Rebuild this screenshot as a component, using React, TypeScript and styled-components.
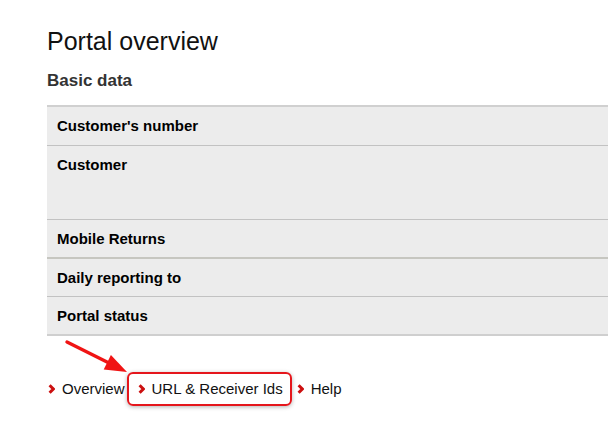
import styled, { createGlobalStyle } from "styled-components"

const GlobalStyle = createGlobalStyle`
  body {
    margin: 0;
    background: #ffffff;
    font-family: "Liberation Sans", Arial, sans-serif;
    color: #000000;
  }
`

const Page = styled.div`
  position: relative;
  padding: 26px 0 0 47px;
  overflow: hidden;
  height: 441px;
  box-sizing: border-box;
`

const Title = styled.h1`
  margin: 0;
  font-size: 25px;
  line-height: 30px;
  font-weight: normal;
  color: #111111;
`

const SubTitle = styled.h2`
  margin: 15px 0 14px;
  font-size: 17px;
  line-height: 20px;
  font-weight: bold;
  color: #333333;
`

const Table = styled.div`
  display: flex;
  flex-direction: column;
  background: #ececec;
  border-top: 2px solid #d0d0d0;
  border-bottom: 2px solid #cfcfcf;
`

const Row = styled.div<{ $height: number; $thick?: boolean; $last?: boolean }>`
  height: ${(p) => p.$height}px;
  padding: 10px 10px 0;
  box-sizing: border-box;
  font-size: 15px;
  line-height: 18px;
  font-weight: bold;
  border-bottom: ${(p) => (p.$last ? "none" : p.$thick ? "2px solid #c6c6c0" : "1px solid #c2c2c2")};
`

const Nav = styled.nav`
  display: flex;
  align-items: center;
  margin-top: 36px;
  padding-left: 1px;
  height: 34px;
`

const Item = styled.a<{ $highlighted?: boolean }>`
  display: flex;
  align-items: center;
  font-size: 15px;
  line-height: 18px;
  color: #111111;
  text-decoration: none;
  margin-right: ${(p) => (p.$highlighted ? 5 : 2)}px;
  ${(p) =>
    p.$highlighted &&
    `
    height: 34px;
    box-sizing: border-box;
    padding: 0 7px 0 9px;
    border: 2px solid #e5161c;
    border-radius: 6px;
    box-shadow: 0 1px 4px rgba(0, 0, 0, 0.3);
  `}
`

const Chevron = styled.svg`
  width: 7px;
  height: 10px;
  margin-right: 7px;
  flex-shrink: 0;
`

const Pointer = styled.svg`
  position: absolute;
  left: 0;
  top: 0;
  pointer-events: none;
`

const Arrow = () => (
  <Chevron viewBox="0 0 7 10">
    <polyline points="1.6,1.3 5.3,5 1.6,8.7" fill="none" stroke="#cc1010" strokeWidth="3" />
  </Chevron>
)

const rows = [
  { label: "Customer's number", height: 39 },
  { label: "Customer", height: 74 },
  { label: "Mobile Returns", height: 39, thick: true },
  { label: "Daily reporting to", height: 38 },
  { label: "Portal status", height: 37, last: true },
]

const links = [
  { label: "Overview" },
  { label: "URL & Receiver Ids", highlighted: true },
  { label: "Help" },
]

const App = () => {
  return (
    <Page>
      <GlobalStyle />
      <Title>Portal overview</Title>
      <SubTitle>Basic data</SubTitle>
      <Table>
        {rows.map((r) => (
          <Row key={r.label} $height={r.height} $thick={r.thick} $last={r.last}>
            {r.label}
          </Row>
        ))}
      </Table>
      <Nav>
        {links.map((l) => (
          <Item key={l.label} href="#" $highlighted={l.highlighted}>
            <Arrow />
            {l.label}
          </Item>
        ))}
      </Nav>
      <Pointer width="608" height="441" viewBox="0 0 608 441">
        <line x1="67" y1="342" x2="108" y2="362.5" stroke="#f01414" strokeWidth="3.4" strokeLinecap="round" />
        <polygon points="127,372 103.7,369.4 110.9,355" fill="#f01414" />
      </Pointer>
    </Page>
  )
}

export default App
